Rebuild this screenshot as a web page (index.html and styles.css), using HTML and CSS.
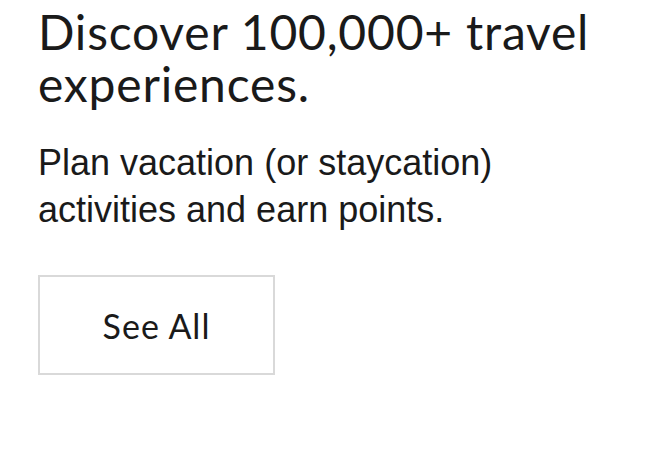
FILE: index.html
```html
<!DOCTYPE html>
<html>
<head>
<meta charset="utf-8">
<link rel="stylesheet" href="styles.css">
</head>
<body>
<section class="promo">
  <h1 class="promo-title">Discover 100,000+ travel experiences.</h1>
  <p class="promo-text">Plan vacation (or staycation) activities and earn points.</p>
  <a class="promo-button" href="#">See All</a>
</section>
</body>
</html>
```
FILE: styles.css
```css
html, body {
  margin: 0;
  padding: 0;
  background: #ffffff;
}
.promo {
  padding: 6px 0 0 38px;
  width: 580px;
  color: #1a1a1a;
}
.promo-title {
  margin: 0;
  font-family: "Lato", "DejaVu Sans", sans-serif;
  font-weight: 400;
  font-size: 48px;
  line-height: 52px;
  letter-spacing: 0.8px;
  color: #1a1a1a;
}
.promo-text {
  margin: 29px 0 0;
  font-family: "Liberation Sans", Arial, sans-serif;
  font-size: 36px;
  line-height: 47px;
  color: #1a1a1a;
}
.promo-button {
  display: flex;
  align-items: center;
  justify-content: center;
  box-sizing: border-box;
  width: 237px;
  height: 100px;
  margin-top: 42px;
  border: 2px solid #d9d9d9;
  font-family: "Lato", "DejaVu Sans", sans-serif;
  font-size: 34px;
  letter-spacing: 1px;
  color: #1a1a1a;
  text-decoration: none;
}
```
